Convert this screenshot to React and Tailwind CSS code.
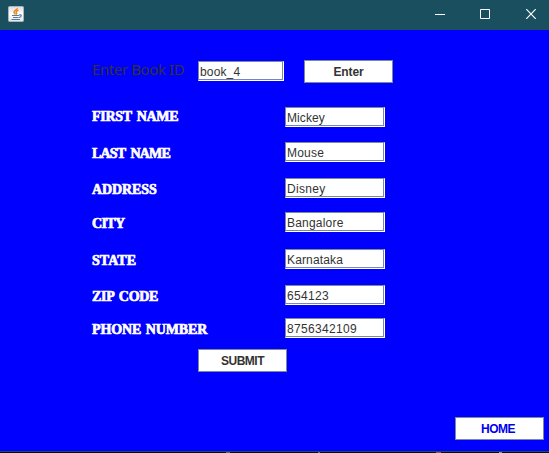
const fields = [
  { label: 'FIRST NAME', value: 'Mickey', row: 'mt-[24px]', shift: 'pt-px', track: 'tracking-[-0.3px] [word-spacing:2px]', vt: 'tracking-[0.1px]' },
  { label: 'LAST NAME', value: 'Mouse', row: 'mt-[15px]', shift: 'pt-[3px]', track: 'tracking-[-0.85px] [word-spacing:3px]', vt: 'tracking-[0.2px]' },
  { label: 'ADDRESS', value: 'Disney', row: 'mt-[16px]', shift: 'pt-[3px]', track: 'tracking-[-0.1px]', vt: 'tracking-[0.3px]' },
  { label: 'CITY', value: 'Bangalore', row: 'mt-[14px]', shift: 'pt-[3px]', track: 'tracking-[-0.6px]', vt: 'tracking-[0.2px]' },
  { label: 'STATE', value: 'Karnataka', row: 'mt-[17px]', shift: 'pt-[3px]', track: 'tracking-[0.05px]', vt: 'tracking-[0.15px]' },
  { label: 'ZIP CODE', value: '654123', row: 'mt-[16px]', shift: 'pt-[3px]', track: 'tracking-[-0.3px] [word-spacing:2px]', vt: 'tracking-[0.33px]' },
  { label: 'PHONE NUMBER', value: '8756342109', row: 'mt-[13px]', shift: 'pt-[3px]', track: 'tracking-[-0.1px] [word-spacing:1px]', vt: 'tracking-[0.33px]' },
];

function EtchedField({ value, width, track }) {
  return (
    <div className={`${width} h-5 shrink-0 border-t border-l border-t-[#7a8a99] border-l-[#7a8a99] border-r border-b border-r-white border-b-white bg-white`}>
      <div className={`h-full border-r border-b border-[#7a8a99] pl-px pt-[3px] text-[12px] leading-[15px] text-[#333] whitespace-nowrap ${track}`}>
        {value}
      </div>
    </div>
  );
}

function Button({ children, className }) {
  return (
    <button className={`block h-[23px] w-[89px] border border-[#7a8a99] bg-white pt-px text-center text-[12px] leading-[20px] font-bold ${className}`}>
      {children}
    </button>
  );
}

function JavaIcon() {
  return (
    <svg width="16" height="16" viewBox="0 0 16 16">
      <defs>
        <linearGradient id="tile" x1="0" y1="0" x2="0" y2="1">
          <stop offset="0" stopColor="#d9dde0" />
          <stop offset="0.5" stopColor="#ffffff" />
          <stop offset="1" stopColor="#e1e5e8" />
        </linearGradient>
      </defs>
      <rect x="0.5" y="0.5" width="15" height="15" rx="1" fill="url(#tile)" stroke="#a9b7bd" />
      <path d="M9.3 2.3C9.3 4 5.6 4.5 6 6.3C6.2 7 7 7.5 7.2 8.6M10.5 4.3C8 5.2 7.6 6 8.4 6.8C9 7.4 8.5 8 8 8.5" fill="none" stroke="#ed8b22" strokeWidth="1.5" />
      <path d="M4 9.5H11M5 11.5H10.5M3.5 13.5H12M11 9C14 8 14 11 11 11.5" fill="none" stroke="#537e9d" strokeWidth="1.2" />
    </svg>
  );
}

export default function App() {
  return (
    <div className="flex h-[453px] w-[549px] flex-col overflow-hidden bg-[#0000ff] font-['Liberation_Sans',Arial,sans-serif]">
      <header className="flex h-[30px] shrink-0 justify-between bg-[#1a4f60] pt-[6px] pl-2">
        <JavaIcon />
        <div className="flex gap-[35px] pt-[3px] pr-[12px]">
          <svg width="10" height="10" viewBox="0 0 10 10"><path d="M0 5.5H10" stroke="#fff" /></svg>
          <svg width="10" height="10" viewBox="0 0 10 10"><path d="M.5 .5H9.5V9.5H.5Z" fill="none" stroke="#fff" /></svg>
          <svg width="12" height="10" viewBox="0 0 12 10"><path d="M1.3 .2L10.7 9.8M10.7 .2L1.3 9.8" stroke="#fff" strokeWidth="1.2" /></svg>
        </div>
      </header>
      <main className="flex h-[421px] shrink-0 flex-col pt-[30px] pl-[92px]">
        <div className="flex h-[23px]">
          <label className="w-[106px] shrink-0 font-['Noto_Sans',sans-serif] text-[15px] leading-[18px] tracking-[-0.4px] whitespace-nowrap text-[#333]">
            Enter Book ID
          </label>
          <div className="pt-px">
            <EtchedField value="book_4" width="w-[86px]" track="tracking-[0.15px]" />
          </div>
          <Button className="ml-5 text-[#333] tracking-[-0.1px]">Enter</Button>
        </div>
        {fields.map((f) => (
          <div key={f.label} className={`flex h-5 shrink-0 ${f.row}`}>
            <label className={`w-[193px] shrink-0 font-['Liberation_Serif',serif] text-[14px] leading-[18px] font-bold whitespace-nowrap text-white [-webkit-text-stroke:0.7px_white] ${f.shift} ${f.track}`}>
              {f.label}
            </label>
            <EtchedField value={f.value} width="w-[100px]" track={f.vt} />
          </div>
        ))}
        <Button className="mt-[11px] ml-[106px] shrink-0 text-[#333] tracking-[-0.5px]">SUBMIT</Button>
        <Button className="mt-[45px] mr-[5px] shrink-0 self-end pr-[3px] text-[#0000f0] tracking-[-0.5px]">HOME</Button>
      </main>
      <div className="h-px shrink-0 bg-[#1a4f60]" />
      <footer className="flex h-px shrink-0 bg-[#080c12]">
        <span className="ml-[226px] h-px w-1 bg-[#59636a]" />
        <span className="ml-[88px] h-px w-[2px] bg-[#527487]" />
        <span className="ml-[116px] h-px w-[5px] bg-[#a44b53]" />
        <span className="ml-[58px] h-px w-[3px] bg-[#8799a3]" />
      </footer>
    </div>
  );
}
